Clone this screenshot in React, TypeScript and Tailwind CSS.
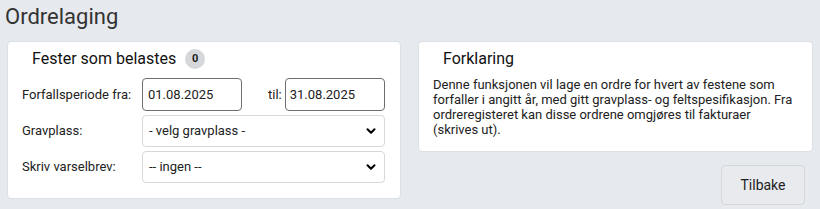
import { ChevronDown } from 'lucide-react';

function Field({ label, children }: { label: string; children: React.ReactNode }) {
  return (
    <div className="flex items-center">
      <label className="w-[120px] shrink-0 text-[13px] text-[#222]">{label}</label>
      {children}
    </div>
  );
}

function Select({ value }: { value: string }) {
  return (
    <div className="flex h-[32px] w-[243px] items-center justify-between rounded-[4px] border border-[#d6d8db] bg-white pl-[6px] pr-[6px] text-[13px] text-[#222]">
      <span>{value}</span>
      <ChevronDown className="h-[14px] w-[14px] text-black" strokeWidth={3.5} />
    </div>
  );
}

export default function App() {
  return (
    <div className="h-[209px] w-[820px] bg-[#e6e9ed] px-[7px] font-['Roboto',sans-serif] text-[#222]">
      <h1 className="-ml-[2px] pt-[2px] text-[22px] leading-[30px] text-[#333]">Ordrelaging</h1>
      <div className="mt-[9px] grid grid-cols-[394px_395px] gap-[17px]">
        <div className="h-[158px] rounded-[4px] border border-[#dcdfe3] bg-white px-[14px] pt-[5px]">
          <div className="flex items-center gap-[9px] pl-[10px]">
            <h2 className="text-[16px] leading-[24px] text-[#111]">Fester som belastes</h2>
            <span className="flex h-[20px] w-[20px] items-center justify-center rounded-full bg-[#d5d7da] text-[11px] font-bold text-[#222]">
              0
            </span>
          </div>
          <div className="mt-[7px] flex flex-col gap-[4px]">
            <Field label="Forfallsperiode fra:">
              <div className="flex h-[33px] w-[100px] items-center rounded-[4px] border border-[#6b6e72] px-[5px] text-[13px]">
                01.08.2025
              </div>
              <span className="ml-[26px] mr-[3px] text-[13px]">til:</span>
              <div className="flex h-[33px] w-[100px] items-center rounded-[4px] border border-[#6b6e72] px-[4px] text-[13px]">
                31.08.2025
              </div>
            </Field>
            <Field label="Gravplass:">
              <Select value="- velg gravplass -" />
            </Field>
            <Field label="Skriv varselbrev:">
              <Select value="-- ingen --" />
            </Field>
          </div>
        </div>
        <div className="flex flex-col items-end">
          <div className="h-[111px] w-full rounded-[4px] border border-[#dcdfe3] bg-white px-[14px] pt-[5px]">
            <h2 className="pl-[10px] text-[16px] leading-[24px] text-[#111]">Forklaring</h2>
            <p className="mt-[6px] text-[13px] leading-[15px] text-[#222]">
              Denne funksjonen vil lage en ordre for hvert av festene som forfaller i angitt år, med gitt
              gravplass- og feltspesifikasjon. Fra ordreregisteret kan disse ordrene omgjøres til fakturaer
              (skrives ut).
            </p>
          </div>
          <button className="mr-[8px] mt-[13px] h-[40px] w-[84px] rounded-[4px] border border-[#d3d6da] bg-[#e8eaee] text-[14px] text-[#222]">
            Tilbake
          </button>
        </div>
      </div>
    </div>
  );
}
